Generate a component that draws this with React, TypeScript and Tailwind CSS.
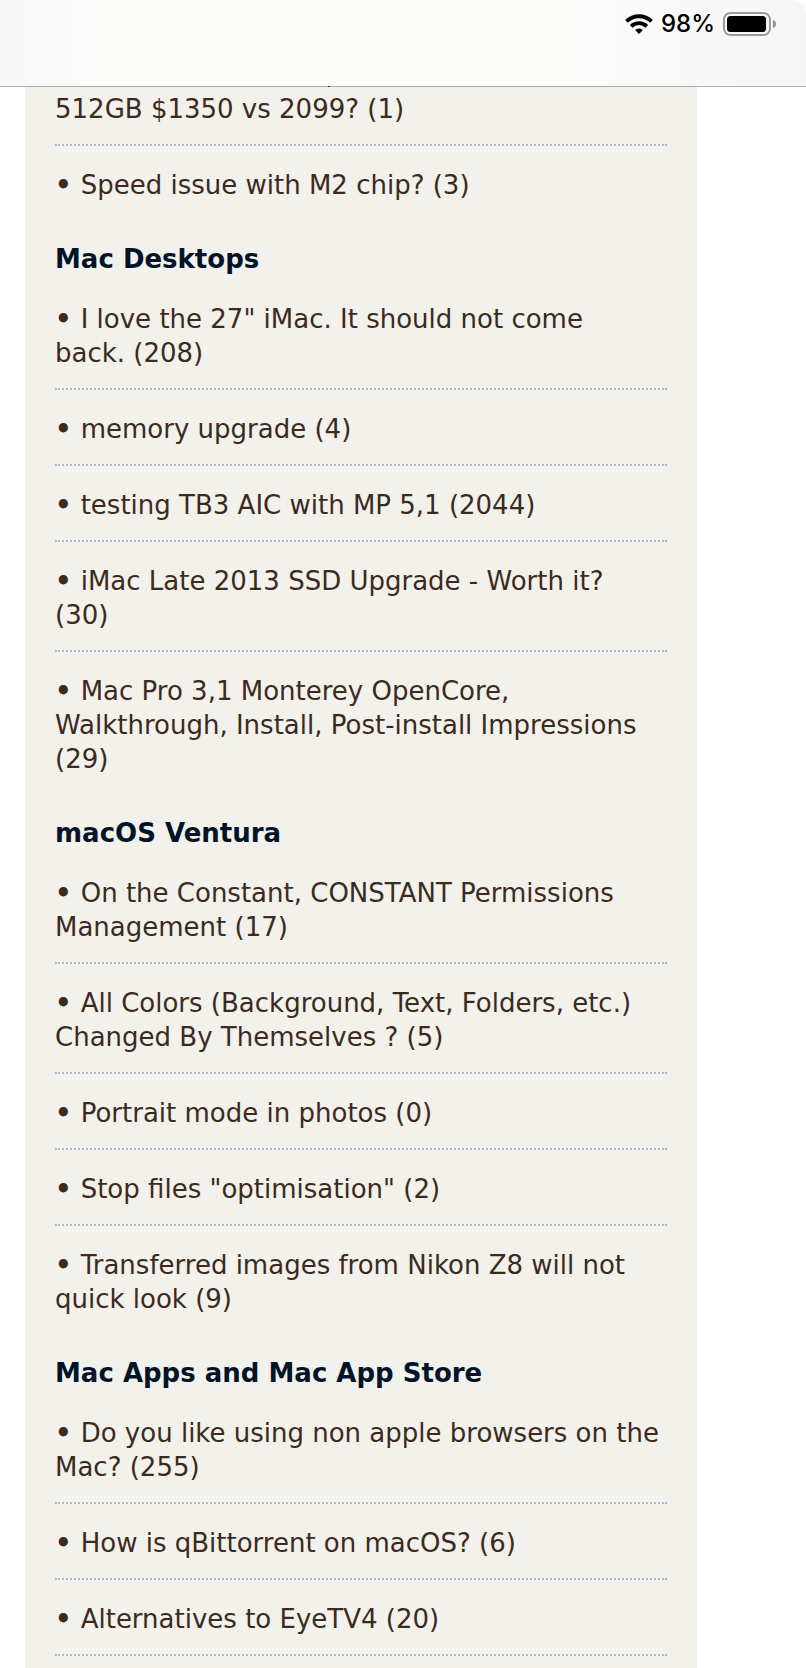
import React from "react";

type Thread = {
  lines: string[];
  replies: number;
};

type Forum = {
  name?: string;
  hasMore?: boolean;
  threads: Thread[];
};

const forums: Forum[] = [
  {
    threads: [
      {
        lines: ['MacBook Pro 14.2", M2 with 16GB and', "512GB $1350 vs 2099?"],
        replies: 1,
      },
      { lines: ["Speed issue with M2 chip?"], replies: 3 },
    ],
  },
  {
    name: "Mac Desktops",
    threads: [
      {
        lines: ['I love the 27" iMac. It should not come', "back."],
        replies: 208,
      },
      { lines: ["memory upgrade"], replies: 4 },
      { lines: ["testing TB3 AIC with MP 5,1"], replies: 2044 },
      { lines: ["iMac Late 2013 SSD Upgrade - Worth it?", ""], replies: 30 },
      {
        lines: [
          "Mac Pro 3,1 Monterey OpenCore,",
          "Walkthrough, Install, Post-install Impressions",
          "",
        ],
        replies: 29,
      },
    ],
  },
  {
    name: "macOS Ventura",
    threads: [
      {
        lines: ["On the Constant, CONSTANT Permissions", "Management"],
        replies: 17,
      },
      {
        lines: [
          "All Colors (Background, Text, Folders, etc.)",
          "Changed By Themselves ?",
        ],
        replies: 5,
      },
      { lines: ["Portrait mode in photos"], replies: 0 },
      { lines: ['Stop files "optimisation"'], replies: 2 },
      {
        lines: ["Transferred images from Nikon Z8 will not", "quick look"],
        replies: 9,
      },
    ],
  },
  {
    name: "Mac Apps and Mac App Store",
    hasMore: true,
    threads: [
      {
        lines: ["Do you like using non apple browsers on the", "Mac?"],
        replies: 255,
      },
      { lines: ["How is qBittorrent on macOS?"], replies: 6 },
      { lines: ["Alternatives to EyeTV4"], replies: 20 },
    ],
  },
];

function WifiIcon() {
  return (
    <svg width="28" height="20" viewBox="0 0 28 20" aria-hidden="true">
      <g fill="none" stroke="#000" strokeWidth="3.800">
        <path d="M1.500 7.400A17.800 17.800 0 0 1 26.500 7.400" />
        <path d="M6.200 12.300A11.100 11.100 0 0 1 21.800 12.300" />
      </g>
      <path d="M14 20l-3.900-3.900a5.500 5.500 0 0 1 7.800 0z" />
    </svg>
  );
}

function BatteryIcon() {
  return (
    <svg width="54" height="24" viewBox="0 0 54 24" aria-hidden="true">
      <rect
        x="1"
        y="1"
        width="46"
        height="22"
        rx="6.500"
        fill="none"
        stroke="#9b9b9b"
        strokeWidth="2"
      />
      <rect x="4" y="4" width="39" height="16" rx="3.500" />
      <path d="M50 8c1.800.6 3 2.200 3 4s-1.200 3.400-3 4z" fill="#8e8e8e" />
    </svg>
  );
}

function ThreadItem({ thread, divider }: { thread: Thread; divider: boolean }) {
  const last = thread.lines.length - 1;

  return (
    <li
      className={
        divider
          ? "border-b-2 border-dotted border-[#b3b9cd] pt-[22px] pb-[18px]"
          : "pt-[22px] pb-[18px]"
      }
    >
      <a href="#" className="block">
        {thread.lines.map((line, i) => (
          <span key={i} className="block">
            {i === 0 && <span className="font-bold">• </span>}
            {i === last ? `${line} (${thread.replies})`.trim() : line}
          </span>
        ))}
      </a>
    </li>
  );
}

export default function App() {
  return (
    <div className="flex h-screen flex-col overflow-hidden bg-white">
      {/* Status bar, its hairline lets the page show through */}
      <header className="relative z-10 -mb-px h-[87px] shrink-0 rounded-tr-xl border-b border-black/30 bg-[linear-gradient(90deg,#f8f8f8,#fcfcfb_12%,#fcfcfb_72%,#f5f5f5)] bg-clip-padding">
        <div className="flex h-12 items-center justify-end gap-2 pr-[29px]">
          <WifiIcon />
          <span className="font-['Inter',sans-serif] text-2xl leading-6 font-medium text-black">
            98%
          </span>
          <BatteryIcon />
        </div>
      </header>

      {/* Forum sidebar, scrolled part way */}
      <main className="min-h-0 flex-1 overflow-hidden">
        <div className="mr-[109px] ml-[25px] min-h-full bg-[#f2f1eb] px-[30px] pb-10 font-['DejaVu_Sans',sans-serif] text-[26px] leading-[34px] text-[#3d2a1e]">
          <div className="-mt-[50px]">
            {forums.map((forum, i) => (
              <section key={i}>
                {forum.name && (
                  <h2 className="pt-[22px] pb-1 font-bold text-[#041428]">
                    {forum.name}
                  </h2>
                )}
                <ul>
                  {forum.threads.map((thread, j) => (
                    <ThreadItem
                      key={j}
                      thread={thread}
                      divider={
                        forum.hasMore || j < forum.threads.length - 1
                      }
                    />
                  ))}
                </ul>
              </section>
            ))}
          </div>
        </div>
      </main>
    </div>
  );
}
